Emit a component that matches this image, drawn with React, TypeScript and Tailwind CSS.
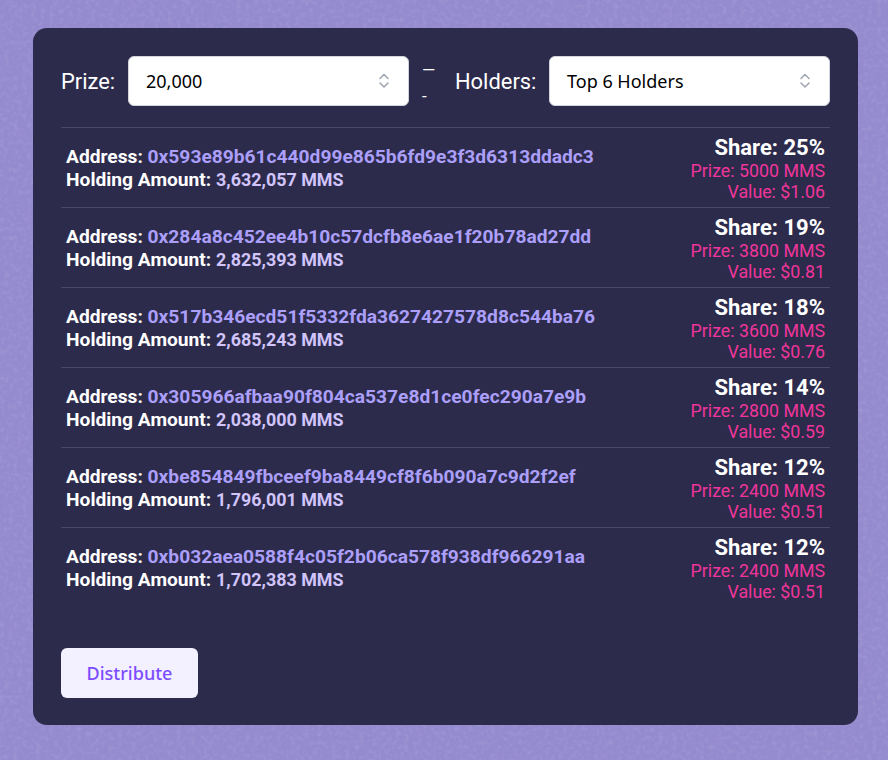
const rows = [
  ["0x593e89b61c440d99e865b6fd9e3f3d6313ddadc3", "3,632,057", "25", "5000", "1.06"],
  ["0x284a8c452ee4b10c57dcfb8e6ae1f20b78ad27dd", "2,825,393", "19", "3800", "0.81"],
  ["0x517b346ecd51f5332fda3627427578d8c544ba76", "2,685,243", "18", "3600", "0.76"],
  ["0x305966afbaa90f804ca537e8d1ce0fec290a7e9b", "2,038,000", "14", "2800", "0.59"],
  ["0xbe854849fbceef9ba8449cf8f6b090a7c9d2f2ef", "1,796,001", "12", "2400", "0.51"],
  ["0xb032aea0588f4c05f2b06ca578f938df966291aa", "1,702,383", "12", "2400", "0.51"],
];

function Chevrons() {
  return (
    <svg width="20" height="20" viewBox="0 0 20 20" fill="none" stroke="#9ca3af" strokeWidth="1.5" strokeLinecap="round" strokeLinejoin="round" className="mt-[-1px] shrink-0">
      <path d="M6 7.5l4-4 4 4" />
      <path d="M6 12l4 4 4-4" />
    </svg>
  );
}

function Select({ value, className }: { value: string; className: string }) {
  return (
    <div className={`flex h-[50px] items-center justify-between rounded-md border border-[#d1d5db] bg-white pl-[17px] pr-[14px] font-['Noto_Sans',sans-serif] text-[18px] text-black ${className}`}>
      <span className="mt-[1px]">{value}</span>
      <Chevrons />
    </div>
  );
}

export default function App() {
  return (
    <div className="relative h-[760px] w-[888px] overflow-hidden bg-[#948ace] pt-[28px] pl-[33px] font-['Roboto',sans-serif]">
      <svg className="absolute inset-0 h-full w-full" aria-hidden="true">
        <filter id="noise">
          <feTurbulence type="fractalNoise" baseFrequency="0.22" numOctaves="3" seed="4" />
          <feColorMatrix values="0 0 0 0 1  0 0 0 0 1  0 0 0 0 1  0 0 0 1.6 -0.72" />
        </filter>
        <rect width="100%" height="100%" filter="url(#noise)" opacity="0.14" />
      </svg>
      <div className="relative flex h-[697px] w-[825px] flex-col rounded-[14px] bg-[#2d2b4c] px-[28px] pt-[28px]">
        <div className="flex h-[50px] items-center">
          <span className="mt-[1px] w-[67px] text-[21.9px] leading-none text-white">Prize:</span>
          <Select value="20,000" className="w-[281px]" />
          <div className="ml-[13px] mt-[4px] flex w-[32px] flex-col text-[17px] leading-[26px] text-white">
            <span className="h-[26px]">—</span>
            <span className="h-[26px]">-</span>
          </div>
          <span className="ml-[1px] mt-[1px] w-[94px] text-[21.9px] leading-none text-white">Holders:</span>
          <Select value="Top 6 Holders" className="w-[281px]" />
        </div>
        <div className="mt-[21px] flex flex-col">
          {rows.map((r) => (
            <div key={r[0]} className="flex h-[80px] items-start justify-between border-t border-[#4a4869] pl-[5px] pr-[5px]">
              <div className="mt-[17px] text-[19.2px] font-bold leading-[23px] text-white">
                <div>
                  Address: <span className="text-[#ab9ffa]">{r[0]}</span>
                </div>
                <div>
                  Holding Amount: <span className="text-[17.9px] text-[#d0c4fb]">{r[1]} MMS</span>
                </div>
              </div>
              <div className="mt-[7px] flex flex-col items-end text-[#f0359b]">
                <div className="text-[22px] font-bold leading-[25px] text-white">Share: {r[2]}%</div>
                <div className="text-[17.8px] leading-[21px]">Prize: {r[3]} MMS</div>
                <div className="text-[17.8px] leading-[21px]">Value: ${r[4]}</div>
              </div>
            </div>
          ))}
        </div>
        <button className="mt-[41px] h-[50px] w-[137px] rounded-md bg-[#f3f0ff] font-['Noto_Sans',sans-serif] text-[18px] font-medium text-[#7c4dff]">
          Distribute
        </button>
      </div>
    </div>
  );
}
